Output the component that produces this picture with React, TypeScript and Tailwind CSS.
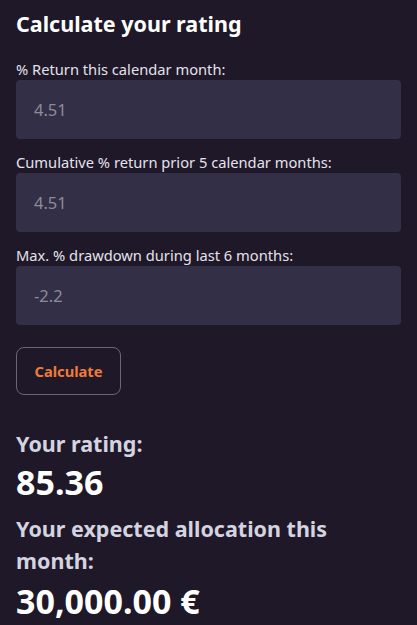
import React, { useState } from 'react';

const fields = [
    { name: 'month', label: '% Return this calendar month:', value: '4.51' },
    { name: 'prior', label: 'Cumulative % return prior 5 calendar months:', value: '4.51' },
    { name: 'drawdown', label: 'Max. % drawdown during last 6 months:', value: '-2.2' },
];

const App: React.FC = () => {
    const [values, setValues] = useState<Record<string, string>>(
        Object.fromEntries(fields.map(f => [f.name, f.value]))
    );

    return (
        <div className="min-h-screen bg-[#1e1828] px-4 pt-[9px] font-['Noto_Sans',sans-serif]">
            <h1 className="text-[21.5px] font-bold leading-[30px] text-white">Calculate your rating</h1>

            <div className="mt-[19px] space-y-[12px]">
                {fields.map(f => (
                    <div key={f.name}>
                        <label className="block text-[14.7px] leading-[22px] text-[#e4e2ec]">{f.label}</label>
                        <input
                            type="text"
                            value={values[f.name]}
                            onChange={e => setValues(prev => ({ ...prev, [f.name]: e.target.value }))}
                            className="block h-[59px] w-full rounded-[4px] bg-[#332f46] px-[18px] text-[16.5px] text-[#8e8b99] outline-none"
                        />
                    </div>
                ))}
            </div>

            <button className="mt-[22px] h-[48px] w-[105px] rounded-[8px] border border-[#6b6677] text-[14.7px] font-bold text-[#f07a3a]">
                Calculate
            </button>

            <div className="mt-[33px] w-[330px]">
                <h2 className="text-[21.5px] font-bold leading-[32px] text-[#d4d3e0]">Your rating:</h2>
                <p className="text-[34px] font-bold leading-[44px] text-white">85.36</p>
                <h2 className="mt-[9px] text-[21.5px] font-bold leading-[32px] text-[#d4d3e0]">Your expected allocation this month:</h2>
                <p className="mt-[2px] text-[34px] font-bold leading-[44px] text-white">30,000.00 €</p>
            </div>
        </div>
    );
};

export default App;
